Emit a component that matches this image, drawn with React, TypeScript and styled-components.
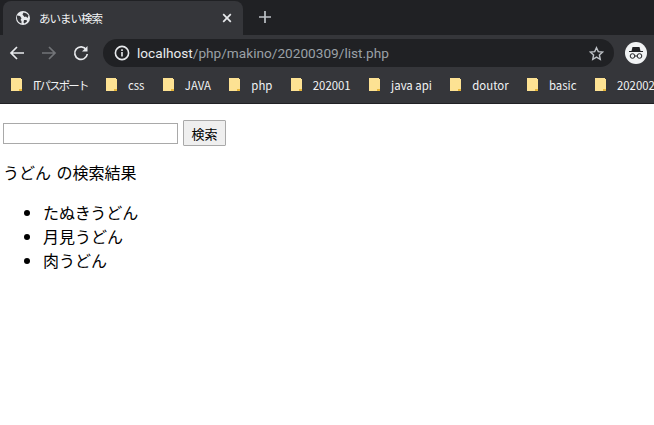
import * as React from "react"
import styled, {createGlobalStyle} from "styled-components"

const bookmarks = ["ITパスポート", "css", "JAVA", "php", "202001", "java api", "doutor", "basic", "202002"]
const results = ["たぬきうどん", "月見うどん", "肉うどん"]

const GlobalStyle = createGlobalStyle`
  html, body {
    margin: 0;
    padding: 0;
    background: #fff;
  }
  body {
    width: 654px;
    height: 425px;
    overflow: hidden;
    font-family: "Noto Sans CJK JP", "Liberation Sans", sans-serif;
  }
`

const Page = styled("div")`
  width: 654px;
  height: 425px;
  overflow: hidden;
  display: flex;
  flex-direction: column;
`

const Chrome = styled("div")`
  flex: none;
  height: 104px;
  display: flex;
  flex-direction: column;
  background: #35363a;
  border-bottom: 1px solid #202124;
  box-sizing: border-box;
`

const TabStrip = styled("div")`
  height: 35px;
  flex: none;
  background: #202124;
  display: flex;
  align-items: flex-end;
  padding-left: 3px;
`

const Tab = styled("div")`
  width: 240px;
  height: 34px;
  box-sizing: border-box;
  padding: 0 8px 0 13px;
  background: #35363a;
  border-radius: 8px 8px 0 0;
  display: flex;
  align-items: center;
  color: #f1f3f4;
  font-size: 11.500px;
  letter-spacing: -1px;
`

const TabTitle = styled("span")`
  flex: 1;
  margin-left: 9px;
`

const TabClose = styled("svg")`
  width: 16px;
  height: 16px;
  margin-top: -1px;
`

const NewTab = styled("svg")`
  width: 16px;
  height: 16px;
  margin: 0 0 1px 14px;
  align-self: center;
`

const Toolbar = styled("div")`
  height: 35px;
  flex: none;
  display: flex;
  align-items: center;
  padding-left: 8px;
`

const NavButton = styled("svg")`
  width: 18px;
  height: 18px;
  margin-right: 14px;
  flex: none;
`

const Omnibox = styled("div")`
  width: 511px;
  height: 28px;
  margin-left: -1px;
  margin-top: 1px;
  flex: none;
  box-sizing: border-box;
  padding: 0 10px 0 11px;
  background: #202124;
  border-radius: 14px;
  display: flex;
  align-items: center;
  font-family: "Roboto", sans-serif;
  font-size: 13.650px;
  color: #9aa0a6;
`

const InfoIcon = styled("svg")`
  width: 16px;
  height: 16px;
  margin-right: 7px;
  flex: none;
`

const Url = styled("div")`
  flex: 1;
  white-space: nowrap;
  margin-top: -1px;
`

const Host = styled("span")`
  color: #e8eaed;
`

const Avatar = styled("div")`
  width: 22px;
  height: 22px;
  margin-left: 11px;
  margin-top: 1px;
  border-radius: 50%;
  background: #f1f3f4;
  flex: none;
  display: flex;
  align-items: center;
  justify-content: center;
`

const BookmarkBar = styled("div")`
  flex: 1;
  display: flex;
  align-items: center;
  padding: 0 0 4px 11px;
  overflow: hidden;
`

const Bookmark = styled("div")`
  display: flex;
  align-items: center;
  flex: none;
  margin-right: 18.400px;
  color: #f1f3f4;
  font-size: 11.400px;
  white-space: nowrap;
`

const BookmarkLabel = styled("span")<{$tight?: boolean}>`
  margin-left: 10px;
  letter-spacing: ${(props) => (props.$tight ? "-1.800px" : "0")};
`

const Content = styled("main")`
  flex: 1;
  padding: 16px 3px 0;
  font-size: 16px;
  line-height: 24px;
  color: #000;
`

const SearchForm = styled("form")`
  display: flex;
  align-items: center;
  height: 26px;
`

const SearchInput = styled("input")`
  width: 175px;
  height: 21px;
  box-sizing: border-box;
  margin: 0;
  padding: 1px 2px;
  border: 1px solid #a9a9a9;
  background: #fff;
`

const SearchButton = styled("button")`
  width: 43px;
  height: 26px;
  margin: 0 0 0 5px;
  padding: 0;
  border: 1px solid #a9a9a9;
  border-radius: 1px;
  background: #efefef;
  color: #000;
  font-family: inherit;
  font-size: 13px;
`

const Heading = styled("p")`
  margin: 14px 0 16px;
  word-spacing: 2px;
`

const ResultList = styled("ul")`
  margin: 0;
  padding-left: 40px;
`

const FolderIcon = () => (
    <svg width="12" height="14" viewBox="0 0 12 14">
        <path d="M0 0h10v1h1v12H0z" fill="#fde293" />
        <path d="M8 13v-2h3v2z" fill="#e8b73a" />
    </svg>
)

export default function App() {
    return (
        <Page>
            <GlobalStyle />
            <Chrome>
                <TabStrip>
                    <Tab>
                        <svg width="14" height="14" viewBox="0 0 14 14">
                            <circle cx="7" cy="7" r="7" fill="#e8eaed" />
                            <path d="M1 4.500l3 .5 1.500 2.200L4.500 9l1 1v2.600C3 12 1 9.500 1 7zM7.500 1.500L6.500 3.500l2 2.500 1.500-.5L11.500 7l1-2.500C11.500 3 10 1.800 7.500 1.500zM8 9l2.500 0 .5 1.500-2.500 2-1-1z" fill="#35363a" />
                        </svg>
                        <TabTitle>あいまい検索</TabTitle>
                        <TabClose viewBox="0 0 16 16">
                            <path d="M4.200 4.200l7.600 7.600M11.800 4.200l-7.600 7.600" stroke="#e8eaed" strokeWidth="1.700" />
                        </TabClose>
                    </Tab>
                    <NewTab viewBox="0 0 16 16">
                        <path d="M8 2v12M2 8h12" stroke="#bdc1c6" strokeWidth="1.700" />
                    </NewTab>
                </TabStrip>
                <Toolbar>
                    <NavButton viewBox="0 0 18 18">
                        <path d="M16 9H3M9 3L3 9l6 6" fill="none" stroke="#e8eaed" strokeWidth="1.700" />
                    </NavButton>
                    <NavButton viewBox="0 0 18 18">
                        <path d="M2 9h13M9 3l6 6-6 6" fill="none" stroke="#727478" strokeWidth="1.700" />
                    </NavButton>
                    <NavButton viewBox="0 0 18 18">
                        <path d="M14.300 5.600A6.300 6.300 0 1 0 15.300 10" fill="none" stroke="#e8eaed" strokeWidth="1.700" />
                        <path d="M15.500 2v5.500H10z" fill="#e8eaed" />
                    </NavButton>
                    <Omnibox>
                        <InfoIcon viewBox="0 0 16 16">
                            <circle cx="8" cy="8" r="6.600" fill="none" stroke="#e8eaed" strokeWidth="1.600" />
                            <path d="M8 7v4.500M8 4.300v1.600" stroke="#e8eaed" strokeWidth="1.600" />
                        </InfoIcon>
                        <Url><Host>localhost</Host>/php/makino/20200309/list.php</Url>
                        <svg width="15" height="15" viewBox="0 0 16 16">
                            <path d="M8 1.800l1.900 4.200 4.600.5-3.400 3.100.9 4.600L8 11.900l-4 2.300.9-4.600L1.500 6.500l4.600-.5z" fill="none" stroke="#bdc1c6" strokeWidth="1.500" />
                        </svg>
                    </Omnibox>
                    <Avatar>
                        <svg width="16" height="16" viewBox="0 0 16 16">
                            <path d="M4.500 2h7l1 4h2.500v1H1V6h2.500z" fill="#202124" />
                            <circle cx="4.500" cy="11" r="2.300" fill="none" stroke="#202124" strokeWidth="1" />
                            <circle cx="11.500" cy="11" r="2.300" fill="none" stroke="#202124" strokeWidth="1" />
                            <path d="M6.800 11h2.400" stroke="#202124" strokeWidth="1" />
                        </svg>
                    </Avatar>
                </Toolbar>
                <BookmarkBar>
                    {bookmarks.map((name) => (
                        <Bookmark key={name}>
                            <FolderIcon />
                            <BookmarkLabel $tight={name === "ITパスポート"}>{name}</BookmarkLabel>
                        </Bookmark>
                    ))}
                </BookmarkBar>
            </Chrome>
            <Content>
                <SearchForm onSubmit={(event) => event.preventDefault()}>
                    <SearchInput type="text" />
                    <SearchButton type="submit">検索</SearchButton>
                </SearchForm>
                <Heading>うどん の検索結果</Heading>
                <ResultList>
                    {results.map((item) => <li key={item}>{item}</li>)}
                </ResultList>
            </Content>
        </Page>
    )
}
